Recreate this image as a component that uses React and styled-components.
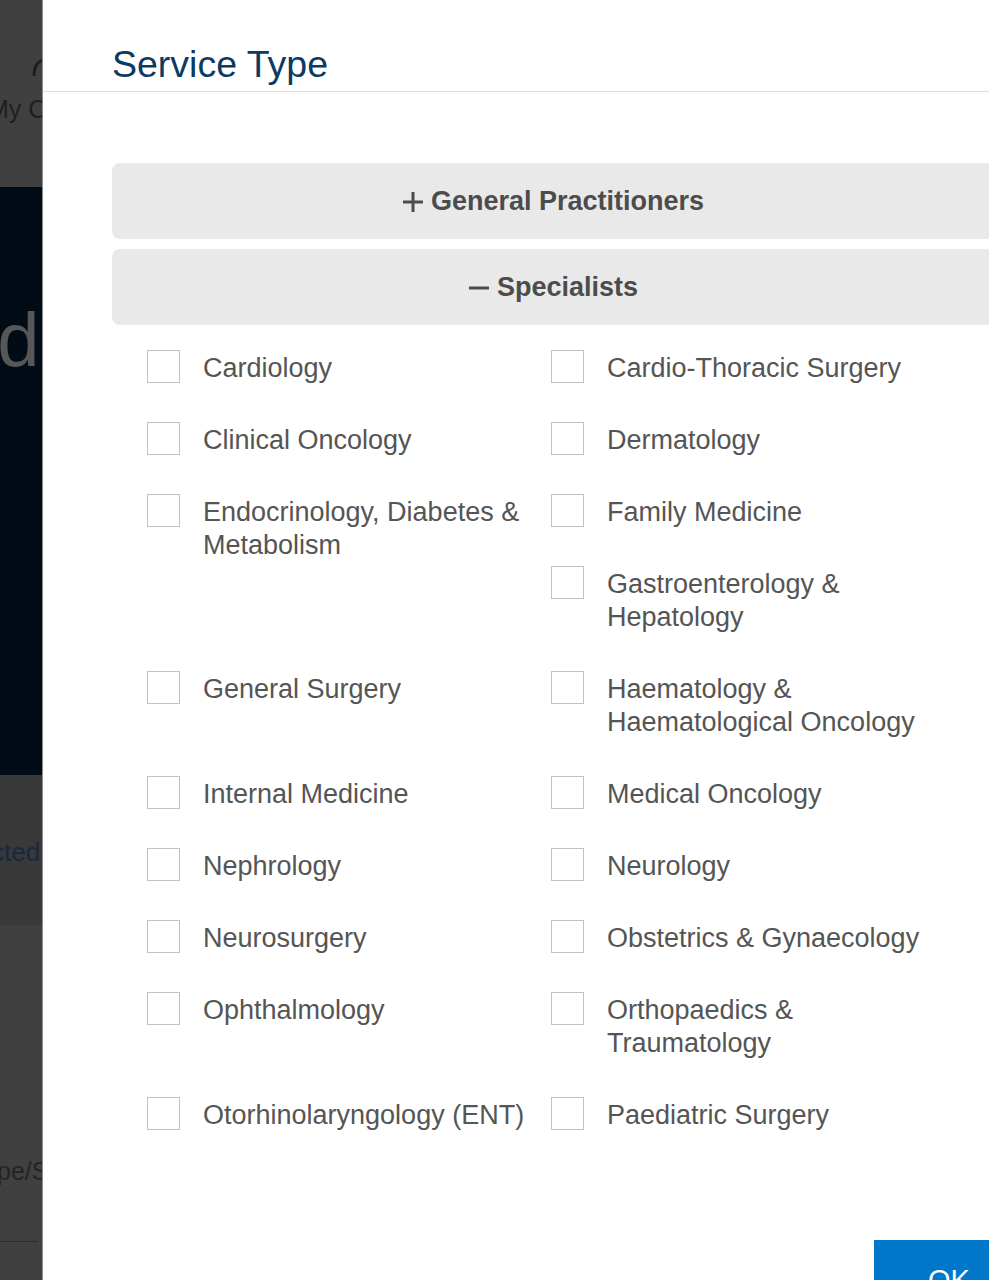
import styled, { createGlobalStyle } from 'styled-components';

const GlobalStyle = createGlobalStyle`
  html, body {
    margin: 0;
    padding: 0;
    overflow: hidden;
    background: #ffffff;
  }
  body {
    font-family: 'Liberation Sans', Arial, sans-serif;
  }
`;

const specialists = [
  'Cardiology',
  'Cardio-Thoracic Surgery',
  'Clinical Oncology',
  'Dermatology',
  'Endocrinology, Diabetes & Metabolism',
  'Family Medicine',
  'Gastroenterology & Hepatology',
  'General Surgery',
  'Haematology & Haematological Oncology',
  'Internal Medicine',
  'Medical Oncology',
  'Nephrology',
  'Neurology',
  'Neurosurgery',
  'Obstetrics & Gynaecology',
  'Ophthalmology',
  'Orthopaedics & Traumatology',
  'Otorhinolaryngology (ENT)',
  'Paediatric Surgery',
];

const Page = styled.div`
  display: flex;
  width: 1100px;
  height: 1280px;
  overflow: hidden;
`;

/* the dimmed page that sits behind the modal */
const Backdrop = styled.div`
  width: 42px;
  flex-shrink: 0;
  display: flex;
  flex-direction: column;
  overflow: hidden;
  white-space: nowrap;
`;

const BackSection = styled.div`
  height: ${(p) => p.$h}px;
  flex-shrink: 0;
  background: ${(p) => p.$bg};
  position: relative;
`;

const BackText = styled.div`
  font-size: ${(p) => p.$size}px;
  color: ${(p) => p.$color};
  padding-top: ${(p) => p.$top}px;
  margin-left: ${(p) => p.$left}px;
  line-height: 1;
`;

const BackRule = styled.div`
  height: 1px;
  background: #2c2c2c;
  margin-top: ${(p) => p.$top}px;
  margin-right: 4px;
`;

const Arc = styled.svg`
  position: absolute;
  left: 30px;
  top: 56px;
`;

const Modal = styled.div`
  width: 1020px;
  flex-shrink: 0;
  background: #ffffff;
  border-left: 1px solid #8c8c8c;
  display: flex;
  flex-direction: column;
`;

const Header = styled.div`
  height: 92px;
  border-bottom: 1px solid #dcdcdc;
  padding-left: 69px;
  box-sizing: border-box;
  display: flex;
  align-items: flex-end;
`;

const Title = styled.h2`
  margin: 0 0 8px;
  font-size: 37.5px;
  font-weight: 400;
  line-height: 1;
  color: #0c3a63;
`;

const Body = styled.div`
  padding: 71px 69px 0 69px;
  display: flex;
  flex-direction: column;
`;

const Accordion = styled.div`
  display: flex;
  flex-direction: column;
  gap: 10px;
`;

const PanelHead = styled.button`
  height: 76px;
  border: none;
  border-radius: 8px;
  background: #e9e9e9;
  display: flex;
  align-items: center;
  justify-content: center;
  gap: 7px;
  font-family: 'Liberation Sans', Arial, sans-serif;
  font-size: 27px;
  font-weight: 700;
  color: #4c4c4c;
  cursor: pointer;
  padding: 0;
`;

const Sign = styled.svg`
  display: block;
  margin-top: 1px;
`;

const Options = styled.div`
  display: flow-root;
  width: 808px;
  margin: 25px 0 0 35px;
`;

const Option = styled.label`
  float: left;
  width: 50%;
  display: flex;
  gap: 23px;
  margin-bottom: 37px;
  cursor: pointer;
`;

const Box = styled.span`
  width: 33px;
  height: 33px;
  box-sizing: border-box;
  border: 1px solid #c2c2c2;
  background: #fff;
  flex-shrink: 0;
`;

const Label = styled.span`
  font-size: 27px;
  line-height: 33px;
  padding-top: 2px;
  color: #555555;
  max-width: 348px;
`;

const Footer = styled.div`
  display: flex;
  justify-content: flex-end;
  padding: 0 39px 0 0;
  margin-top: auto;
`;

const OkButton = styled.button`
  width: 150px;
  height: 80px;
  border: none;
  background: #0077c8;
  color: #fff;
  font-family: 'Liberation Sans', Arial, sans-serif;
  font-size: 29px;
  padding: 26px 0 0;
  display: flex;
  justify-content: center;
  align-items: flex-start;
  line-height: 1;
  margin-bottom: -40px;
`;

const Plus = () => (
  <Sign width="22" height="22" viewBox="0 0 22 22">
    <path d="M11 1v20M1 11h20" stroke="#4c4c4c" strokeWidth="3" />
  </Sign>
);

const Minus = () => (
  <Sign width="22" height="22" viewBox="0 0 22 22">
    <path d="M1 11h20" stroke="#4c4c4c" strokeWidth="3" />
  </Sign>
);

const App = () => (
  <>
    <GlobalStyle />
    <Page>
      <Backdrop>
        <BackSection $h={187} $bg="#404040">
          <Arc width="14" height="22" viewBox="0 0 14 22">
            <path d="M4 20 C4 10 8 5 14 4" fill="none" stroke="#1e1e1e" strokeWidth="3" />
          </Arc>
          <BackText $size={25} $color="#1f1f1f" $top={97} $left={-12}>My C</BackText>
        </BackSection>
        <BackSection $h={588} $bg="#020c17">
          <BackText $size={76} $color="#575757" $top={115} $left={-45}>nd</BackText>
        </BackSection>
        <BackSection $h={150} $bg="#393939">
          <BackText $size={26} $color="#182840" $top={64} $left={-9}>cted</BackText>
        </BackSection>
        <BackSection $h={355} $bg="#404040">
          <BackText $size={25} $color="#242424" $top={234} $left={-3}>pe/S</BackText>
          <BackRule $top={57} />
        </BackSection>
      </Backdrop>

      <Modal>
        <Header>
          <Title>Service Type</Title>
        </Header>
        <Body>
          <Accordion>
            <PanelHead>
              <Plus />
              General Practitioners
            </PanelHead>
            <PanelHead>
              <Minus />
              Specialists
            </PanelHead>
          </Accordion>
          <Options>
            {specialists.map((name) => (
              <Option key={name}>
                <Box />
                <Label>{name}</Label>
              </Option>
            ))}
          </Options>
        </Body>
        <Footer>
          <OkButton>OK</OkButton>
        </Footer>
      </Modal>
    </Page>
  </>
);

export default App;
